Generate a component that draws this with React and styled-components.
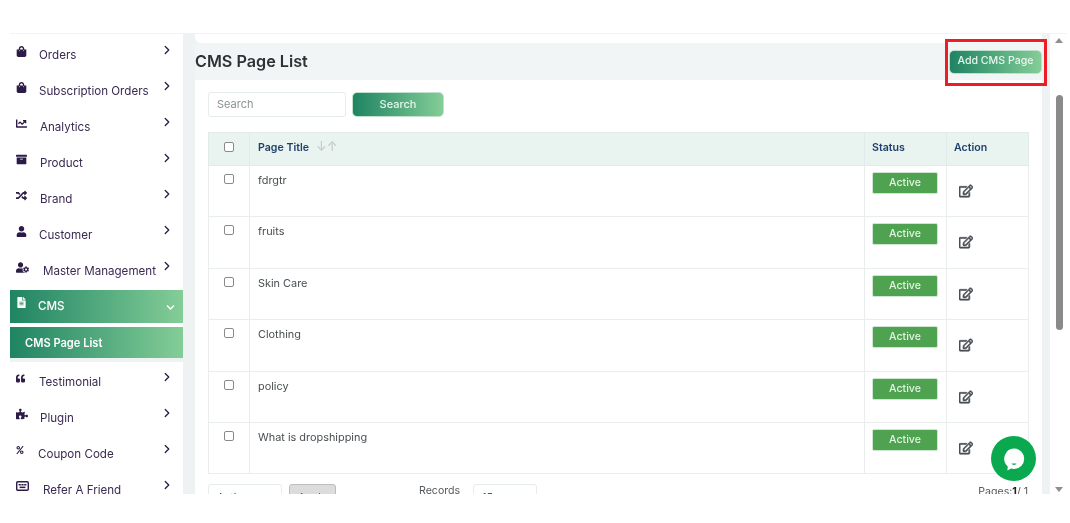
import React from 'react';
import styled, { createGlobalStyle } from 'styled-components';
import {
  FaShoppingBag, FaChartLine, FaArchive, FaRandom, FaUser, FaUserCog, FaFileAlt,
  FaQuoteLeft, FaPuzzlePiece, FaPercent, FaRegEdit, FaChevronDown,
} from 'react-icons/fa';
import { ChevronRight } from 'lucide-react';

const GRADIENT = 'linear-gradient(90deg, #1f8463 0%, #84cd97 100%)';

const GlobalStyle = createGlobalStyle`
  html, body {
    margin: 0;
    padding: 0;
    background: #fff;
    overflow: hidden;
  }
  * { box-sizing: border-box; }
  body { font-family: Inter, "Open Sans", sans-serif; }
`;

const Page = styled.div`
  position: relative;
  width: 1070px;
  height: 523px;
  padding-top: 33px;
  background: #fff;
  filter: blur(0.3px);
`;

const Frame = styled.div`
  display: flex;
  width: 1057px;
  height: 461px;
  margin-left: 10px;
  overflow: hidden;
  border-top: 1px solid #f3f3f3;
`;

const Sidebar = styled.nav`
  flex: 0 0 173px;
  padding-top: 2px;
  background: #fff;
`;

const MenuRow = styled.div`
  display: flex;
  height: 36px;
  padding: 10px 9px 0 6px;
  color: #3b2a52;
  font-size: 11.6px;
  white-space: nowrap;
`;

const MenuIcon = styled.span`
  display: flex;
  align-items: center;
  flex: 0 0 ${p => p.$w || 12}px;
  height: 12px;
  margin-top: -1px;
  font-size: ${p => p.$size || 11}px;
  color: #2c1a47;
`;

const MenuLabel = styled.span`
  margin-left: ${p => p.$gap}px;
  line-height: 18px;
`;

const Chevron = styled.span`
  display: flex;
  margin-left: auto;
  margin-top: -3px;
  color: #2c1a47;
`;

const ActiveRow = styled.div`
  display: flex;
  align-items: center;
  height: 33px;
  margin-top: 2px;
  padding: 0 8px 2px 6px;
  background: ${GRADIENT};
  color: #fff;
  font-size: 11.6px;
  font-weight: 500;
`;

const ActiveIcon = styled.span`
  display: flex;
  margin-top: -6px;
  font-size: 11px;
`;

const ActiveChevron = styled.span`
  display: flex;
  margin-left: auto;
  margin-top: 4px;
  font-size: 9px;
`;

const SubRow = styled.div`
  display: flex;
  align-items: center;
  height: 31px;
  margin-top: 4px;
  margin-bottom: 5px;
  padding-left: 15px;
  background: ${GRADIENT};
  color: #fff;
  font-size: 11.1px;
  font-weight: 600;
  box-shadow: 0 4px 0 #eef2f3;
`;

const Main = styled.main`
  flex: 1;
  min-width: 0;
  padding: 0 8px 0 12px;
  background: #eef2f3;
`;

const TopBar = styled.div`
  height: 9px;
  background: #fff;
  border-radius: 0 0 0 6px;
`;

const TitleBar = styled.div`
  display: flex;
  align-items: center;
  justify-content: space-between;
  height: 37px;
  background: #f1f5f5;
`;

const Title = styled.h1`
  margin: 0 0 2px;
  color: #2d3335;
  font-size: 16.2px;
  font-weight: 600;
`;

const GradientButton = styled.button`
  height: ${p => p.$h}px;
  width: ${p => p.$w}px;
  padding: 0 0 2px;
  border: 1px solid #bfe0cc;
  border-radius: 5px;
  background: ${GRADIENT};
  color: #e8f5ec;
  font: 500 ${p => p.$font}px Inter, sans-serif;
`;

const Card = styled.section`
  height: 420px;
  padding: 12px 14px 0 13px;
  background: #fff;
`;

const SearchRow = styled.div`
  display: flex;
  gap: 6px;
  margin-bottom: 15px;
`;

const SearchInput = styled.input`
  width: 138px;
  height: 25px;
  padding: 0 8px 2px;
  border: 1px solid #e6ebeb;
  border-radius: 3px;
  font: 11px Inter, sans-serif;
  &::placeholder { color: #8b9294; }
`;

const Table = styled.table`
  width: 820px;
  border-collapse: collapse;
  table-layout: fixed;

  tbody tr:nth-child(even) td { height: 52px; }
  tbody tr:last-child td { height: 51px; }
`;

const HeadCell = styled.th`
  height: 33px;
  padding: 0 8px 3px ${p => p.$px || 8}px;
  border: 1px solid #e3eaea;
  background: #e9f3f0;
  color: #1f3f6b;
  font-size: 10.6px;
  font-weight: 600;
  line-height: 12px;
  text-align: left;
`;

const Cell = styled.td`
  height: 51px;
  padding: ${p => p.$top || 7}px 8px 0 ${p => p.$px || 8}px;
  border: 1px solid #e9eded;
  color: #4a4f52;
  font-size: 10.9px;
  vertical-align: top;
`;

const Box = styled.span`
  display: block;
  width: 10px;
  height: 10px;
  margin: ${p => p.$head ? '-1px' : '1px'} auto 0;
  border: 1px solid #8a8a8a;
  border-radius: 2px;
  background: #fff;
`;

const SortArrows = styled.span`
  margin-left: 7px;
  color: #c4c8c8;
  font-weight: 400;
  font-size: 13px;
  line-height: 10px;
`;

const Badge = styled.span`
  display: block;
  width: 66px;
  height: 22px;
  border: 1px solid #cfe6d3;
  border-radius: 2px;
  background: #4fa350;
  color: #e3f2e3;
  font-size: 10.6px;
  font-weight: 500;
  line-height: 20px;
  text-align: center;
`;

const EditIcon = styled.span`
  display: block;
  padding: 11px 0 0 5px;
  color: #4a4f55;
  font-size: 14px;
  line-height: 14px;

  svg {
    stroke: currentColor;
    stroke-width: 24px;
  }
`;

const Footer = styled.div`
  display: flex;
  align-items: flex-start;
  width: 820px;
  margin-top: 10px;
  color: #55595c;
  font-size: 10.6px;
`;

const FakeSelect = styled.div`
  width: ${p => p.$w}px;
  height: 26px;
  margin-left: ${p => p.$ml || 0}px;
  padding: 6px 8px;
  border: 1px solid #e6ebeb;
  border-radius: 3px;
`;

const ApplyButton = styled.div`
  width: 47px;
  height: 26px;
  margin-left: 7px;
  padding-top: 6px;
  border: 1px solid #bdbdbd;
  border-radius: 3px;
  background: #dcdcdc;
  text-align: center;
`;

const RecordsLabel = styled.span`
  margin-left: 83px;
`;

const PagesLabel = styled.span`
  margin-left: auto;
  margin-top: 1px;

  b { color: #222; }
`;

const ScrollBar = styled.div`
  position: relative;
  flex: 0 0 17px;
  background: #fff;
`;

const ScrollArrow = styled.span`
  position: absolute;
  left: 5px;
  ${p => p.$down ? 'bottom: 2px;' : 'top: 4px;'}
  border-left: 4px solid transparent;
  border-right: 4px solid transparent;
  ${p => p.$down ? 'border-top' : 'border-bottom'}: 5px solid #8f8f8f;
`;

const ScrollThumb = styled.span`
  position: absolute;
  left: 6px;
  top: 61px;
  width: 7px;
  height: 235px;
  border-radius: 4px;
  background: #8a8a8a;
`;

const Highlight = styled.div`
  position: absolute;
  left: 945px;
  top: 39px;
  width: 102px;
  height: 47px;
  border: 3px solid #ee1c25;
  pointer-events: none;
`;

const ChatBubble = styled.div`
  position: absolute;
  left: 991px;
  top: 436px;
  display: flex;
  align-items: center;
  justify-content: center;
  width: 45px;
  height: 45px;
  border-radius: 50%;
  background: #0aa94f;
`;

const ReferIcon = () => (
  <svg width="13" height="11" viewBox="0 0 13 11" fill="none">
    <rect x="0.7" y="0.7" width="11.6" height="8.6" rx="1.2" stroke="currentColor" strokeWidth="1.4" />
    <rect x="2.6" y="3" width="2.2" height="1.5" fill="currentColor" />
    <rect x="5.4" y="3" width="2.2" height="1.5" fill="currentColor" />
    <rect x="8.2" y="3" width="2.2" height="1.5" fill="currentColor" />
    <rect x="3.6" y="5.6" width="5.8" height="1.5" fill="currentColor" />
  </svg>
);

const menuTop = [
  { icon: <FaShoppingBag />, label: 'Orders', gap: 11 },
  { icon: <FaShoppingBag />, label: 'Subscription Orders', gap: 11 },
  { icon: <FaChartLine />, label: 'Analytics', gap: 12 },
  { icon: <FaArchive />, label: 'Product', gap: 12 },
  { icon: <FaRandom />, label: 'Brand', gap: 12 },
  { icon: <FaUser />, label: 'Customer', gap: 11 },
  { icon: <FaUserCog />, label: 'Master Management', w: 13, size: 13, gap: 14 },
];

const menuBottom = [
  { icon: <FaQuoteLeft />, label: 'Testimonial', size: 9, gap: 11 },
  { icon: <FaPuzzlePiece />, label: 'Plugin', size: 12, gap: 12 },
  { icon: <FaPercent />, label: 'Coupon Code', size: 8, gap: 10 },
  { icon: <ReferIcon />, label: 'Refer A Friend', w: 13, gap: 14 },
];

const rows = ['fdrgtr', 'fruits', 'Skin Care', 'Clothing', 'policy', 'What is dropshipping'];

const MenuItem = ({ icon, label, w, size, gap }) => (
  <MenuRow>
    <MenuIcon $w={w} $size={size}>{icon}</MenuIcon>
    <MenuLabel $gap={gap}>{label}</MenuLabel>
    <Chevron><ChevronRight size={14} strokeWidth={2.2} /></Chevron>
  </MenuRow>
);

const App = () => (
  <Page>
    <GlobalStyle />
    <Frame>
      <Sidebar>
        {menuTop.map(item => <MenuItem key={item.label} {...item} />)}
        <ActiveRow>
          <ActiveIcon><FaFileAlt /></ActiveIcon>
          <MenuLabel $gap={11}>CMS</MenuLabel>
          <ActiveChevron><FaChevronDown /></ActiveChevron>
        </ActiveRow>
        <SubRow>CMS Page List</SubRow>
        {menuBottom.map(item => <MenuItem key={item.label} {...item} />)}
      </Sidebar>
      <Main>
        <TopBar />
        <TitleBar>
          <Title>CMS Page List</Title>
          <GradientButton $w={93} $h={24} $font={10.6}>Add CMS Page</GradientButton>
        </TitleBar>
        <Card>
          <SearchRow>
            <SearchInput placeholder="Search" />
            <GradientButton $w={92} $h={25} $font={11}>Search</GradientButton>
          </SearchRow>
          <Table>
            <colgroup>
              <col width="41" />
              <col width="615" />
              <col width="82" />
              <col width="82" />
            </colgroup>
            <thead>
              <tr>
                <HeadCell><Box $head /></HeadCell>
                <HeadCell>Page Title<SortArrows>↓↑</SortArrows></HeadCell>
                <HeadCell $px={7}>Status</HeadCell>
                <HeadCell $px={7}>Action</HeadCell>
              </tr>
            </thead>
            <tbody>
              {rows.map(title => (
                <tr key={title}>
                  <Cell><Box /></Cell>
                  <Cell>{title}</Cell>
                  <Cell $top={6} $px={7}><Badge>Active</Badge></Cell>
                  <Cell $px={7}><EditIcon><FaRegEdit /></EditIcon></Cell>
                </tr>
              ))}
            </tbody>
          </Table>
          <Footer>
            <FakeSelect $w={74}>Action</FakeSelect>
            <ApplyButton>Apply</ApplyButton>
            <RecordsLabel>Records</RecordsLabel>
            <FakeSelect $w={64} $ml={13}>15</FakeSelect>
            <PagesLabel>Pages:<b>1</b>/ 1</PagesLabel>
          </Footer>
        </Card>
      </Main>
      <ScrollBar>
        <ScrollArrow />
        <ScrollThumb />
        <ScrollArrow $down />
      </ScrollBar>
    </Frame>
    <Highlight />
    <ChatBubble>
      <svg width="26" height="26" viewBox="0 0 26 26">
        <path d="M13 2.5a10.2 10.2 0 0 1 0 20.4c-1 0-2-.1-2.9-.4L6.4 24.6l.4-4.2A10.2 10.2 0 0 1 13 2.5z" fill="#fff" />
        <path d="M10.5 17.5h5c-.5 1-1.4 1.4-2.5 1.4s-2-.4-2.5-1.4z" fill="#0aa94f" />
      </svg>
    </ChatBubble>
  </Page>
);

export default App;
